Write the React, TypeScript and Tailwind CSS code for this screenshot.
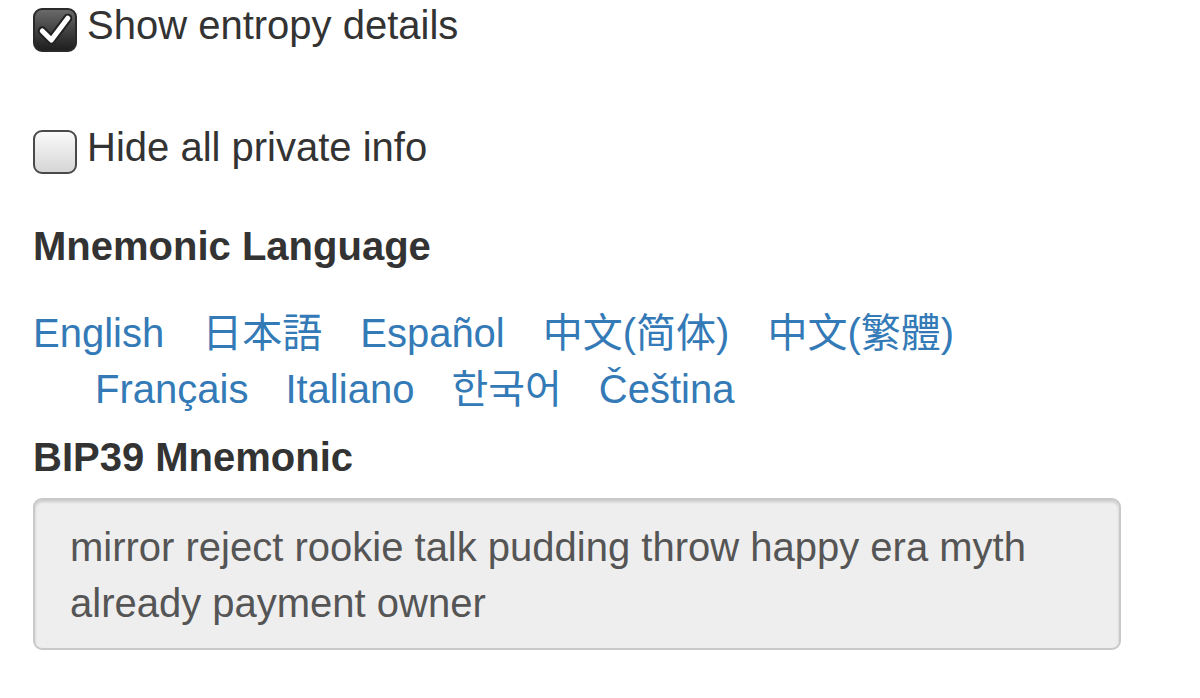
const sans = "font-['Liberation_Sans','Noto_Sans_CJK_SC',sans-serif]";

function CheckBox({ checked }: { checked: boolean }) {
  if (checked) {
    return (
      <span className="mt-[7px] flex h-[44px] w-[44px] shrink-0 items-center justify-center rounded-[9px] border-2 border-[#2a2a2a] bg-gradient-to-b from-[#6a6a6a] to-[#1f1f1f]">
        <svg viewBox="0 0 44 44" className="h-[44px] w-[44px]">
          <path d="M8 23 L18 33 L36 9" fill="none" stroke="#222" strokeWidth="10" strokeLinecap="round" strokeLinejoin="round" />
          <path d="M8 23 L18 33 L36 9" fill="none" stroke="#fff" strokeWidth="5.5" strokeLinecap="round" strokeLinejoin="round" />
        </svg>
      </span>
    );
  }
  return (
    <span className="mt-[7px] h-[44px] w-[44px] shrink-0 rounded-[9px] border-2 border-[#4a4a4a] bg-gradient-to-b from-[#fafafa] to-[#d6d6d6]" />
  );
}

const row1 = [
  { t: "English", f: "" },
  { t: "日本語", f: "font-['Liberation_Sans','Noto_Sans_CJK_JP',sans-serif]" },
  { t: "Español", f: "" },
  { t: "中文(简体)", f: "font-['Liberation_Sans','Noto_Sans_CJK_SC',sans-serif]" },
  { t: "中文(繁體)", f: "font-['Liberation_Sans','Noto_Sans_CJK_TC',sans-serif]" },
];

const row2 = [
  { t: "Français", f: "" },
  { t: "Italiano", f: "" },
  { t: "한국어", f: "font-['Liberation_Sans','Noto_Sans_CJK_KR',sans-serif]" },
  { t: "Čeština", f: "" },
];

export default function App() {
  return (
    <div className={`${sans} min-h-[698px] w-[1200px] bg-white px-[33px] pt-[1px] text-[40px] text-[#333]`}>
      <label className="flex items-start gap-[10px]">
        <CheckBox checked />
        <span className="leading-[48px]">Show entropy details</span>
      </label>

      <label className="mt-[71px] flex items-start gap-[10px]">
        <CheckBox checked={false} />
        <span className="leading-[48px]">Hide all private info</span>
      </label>

      <h3 className="mt-[44px] text-[40px] font-bold leading-[56px]">Mnemonic Language</h3>

      <div className="mt-[31px] leading-[56px] text-[#337ab7]">
        <div className="flex gap-[38px]">
          {row1.map((l) => (
            <a key={l.t} href="#" className={l.f}>
              {l.t}
            </a>
          ))}
        </div>
        <div className="flex gap-[37px] pl-[62px]">
          {row2.map((l) => (
            <a key={l.t} href="#" className={l.f}>
              {l.t}
            </a>
          ))}
        </div>
      </div>

      <h3 className="mt-[12px] text-[40px] font-bold leading-[56px]">BIP39 Mnemonic</h3>

      <div className="mt-[13px] h-[152px] w-[1088px] rounded-[9px] border-2 border-[#c9c9c9] bg-[#eeeeee] px-[35px] pt-[19px] leading-[56px] text-[#555] shadow-[inset_0_2px_3px_rgba(0,0,0,0.15)]">
        mirror reject rookie talk pudding throw happy era myth already payment owner
      </div>
    </div>
  );
}
